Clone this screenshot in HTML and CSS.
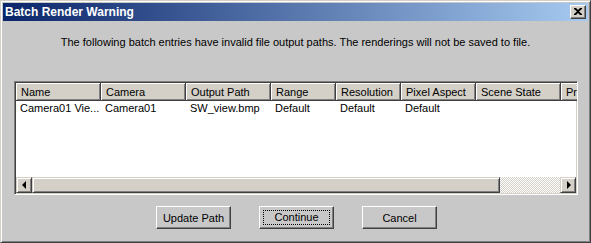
FILE: index.html
```html
<!DOCTYPE html>
<html lang="en">
<head>
    <meta charset="UTF-8">
    <title>Batch Render Warning</title>
    <link rel="stylesheet" href="styles.css">
</head>
<body>
    <div class="window">
        <div class="titlebar">
            <span class="title">Batch Render Warning</span>
            <div class="close">
                <svg width="8" height="7" viewBox="0 0 8 7">
                    <path d="M0 0h2l2 2 2-2h2v1l-3 2.5 3 2.5v1h-2l-2-2-2 2h-2v-1l3-2.5-3-2.5z" fill="#000"/>
                </svg>
            </div>
        </div>
        <p class="message">The following batch entries have invalid file output paths. The renderings will not be saved to file.</p>
        <div class="list">
            <div class="header">
                <div class="col w85">Name</div>
                <div class="col w85">Camera</div>
                <div class="col w85">Output Path</div>
                <div class="col w65">Range</div>
                <div class="col w65">Resolution</div>
                <div class="col w75">Pixel Aspect</div>
                <div class="col w85">Scene State</div>
                <div class="col w85">Pr</div>
            </div>
            <div class="rows">
                <div class="row">
                    <div class="cell w85">Camera01 Vie...</div>
                    <div class="cell w85">Camera01</div>
                    <div class="cell w85">SW_view.bmp</div>
                    <div class="cell w65">Default</div>
                    <div class="cell w65">Default</div>
                    <div class="cell w75">Default</div>
                </div>
            </div>
            <div class="hscroll">
                <div class="arrow"><span class="tri left"></span></div>
                <div class="thumb"></div>
                <div class="track"></div>
                <div class="arrow"><span class="tri right"></span></div>
            </div>
        </div>
        <div class="buttons">
            <button class="btn">Update Path</button>
            <button class="btn default"><span class="focus">Continue</span></button>
            <button class="btn">Cancel</button>
        </div>
    </div>
</body>
</html>
```

FILE: styles.css
```css
body, html {
    margin: 0;
    padding: 0;
    background: #c8c8c8;
}
.window {
    width: 591px;
    height: 243px;
    box-sizing: border-box;
    border-top: 1px solid #d4d0c8;
    border-left: 1px solid #d4d0c8;
    border-right: 1px solid #404040;
    border-bottom: 1px solid #404040;
    box-shadow: inset 1px 1px #fff, inset -1px -1px #808080;
    padding: 2px;
    background: #c8c8c8;
    display: flex;
    flex-direction: column;
    font-family: "Liberation Sans", Arial, sans-serif;
    font-size: 11px;
    color: #000;
}
.titlebar {
    height: 18px;
    display: flex;
    align-items: center;
    justify-content: space-between;
    padding: 0 2px 0 2px;
    background: linear-gradient(to right, #0a246a, #a6caf0);
}
.title {
    color: #fff;
    font-weight: bold;
    font-size: 12px;
}
.close {
    width: 16px;
    height: 14px;
    box-sizing: border-box;
    background: #d4d0c8;
    border-top: 1px solid #fff;
    border-left: 1px solid #fff;
    border-right: 1px solid #404040;
    border-bottom: 1px solid #404040;
    box-shadow: inset -1px -1px #808080;
    display: flex;
    align-items: center;
    justify-content: center;
    padding: 0 1px 1px 0;
}
.message {
    margin: 14px 0 0 0;
    height: 14px;
    line-height: 14px;
    text-align: center;
}
.list {
    margin: 32px 10px 0 11px;
    height: 114px;
    box-sizing: border-box;
    border-top: 1px solid #808080;
    border-left: 1px solid #808080;
    border-right: 1px solid #fff;
    border-bottom: 1px solid #fff;
    box-shadow: inset 1px 1px #404040, inset -1px -1px #d4d0c8;
    padding: 1px;
    background: #fff;
    display: flex;
    flex-direction: column;
    overflow: hidden;
}
.header {
    display: flex;
    height: 18px;
    flex: none;
}
.col {
    flex: none;
    box-sizing: border-box;
    height: 18px;
    line-height: 18px;
    padding: 0 5px;
    background: #d4d0c8;
    border-right: 1px solid #404040;
    border-bottom: 1px solid #404040;
    box-shadow: inset 1px 1px #fff, inset -1px -1px #808080;
    white-space: nowrap;
    overflow: hidden;
}
.w85 { width: 85px; }
.w75 { width: 75px; }
.w65 { width: 65px; }
.rows {
    flex: 1;
}
.row {
    display: flex;
    height: 15px;
    line-height: 15px;
}
.cell {
    flex: none;
    box-sizing: border-box;
    padding: 0 4px;
    white-space: nowrap;
    overflow: hidden;
}
.hscroll {
    display: flex;
    height: 16px;
    flex: none;
}
.arrow, .thumb {
    box-sizing: border-box;
    background: #d4d0c8;
    border-top: 1px solid #d4d0c8;
    border-left: 1px solid #d4d0c8;
    border-right: 1px solid #404040;
    border-bottom: 1px solid #404040;
    box-shadow: inset 1px 1px #fff, inset -1px -1px #808080;
}
.arrow {
    width: 16px;
    flex: none;
    display: flex;
    align-items: center;
    justify-content: center;
}
.thumb {
    width: 468px;
    flex: none;
}
.track {
    flex: 1;
    background: repeating-conic-gradient(#fff 0 25%, #d4d0c8 0 50%) 0 0 / 2px 2px;
}
.tri {
    width: 0;
    height: 0;
    border-top: 4px solid transparent;
    border-bottom: 4px solid transparent;
}
.tri.left {
    border-right: 4px solid #000;
    margin-right: 1px;
}
.tri.right {
    border-left: 4px solid #000;
    margin-left: 1px;
}
.buttons {
    display: flex;
    justify-content: center;
    gap: 28px;
    margin: 11px 0 0 2px;
}
.btn {
    width: 75px;
    height: 23px;
    box-sizing: border-box;
    margin: 0;
    padding: 0;
    font: inherit;
    color: #000;
    background: #c8c8c8;
    border-top: 1px solid #fff;
    border-left: 1px solid #fff;
    border-right: 1px solid #404040;
    border-bottom: 1px solid #404040;
    box-shadow: inset -1px -1px #808080;
}
.btn.default {
    border-top: 1px solid #fff;
    border-left: 1px solid #fff;
    border-right: 1px solid #404040;
    border-bottom: 1px solid #404040;
    box-shadow: inset -1px -1px #808080;
    padding: 3px;
}
.focus {
    display: block;
    height: 15px;
    line-height: 13px;
    box-sizing: border-box;
    border: 1px dotted #000;
}
```
